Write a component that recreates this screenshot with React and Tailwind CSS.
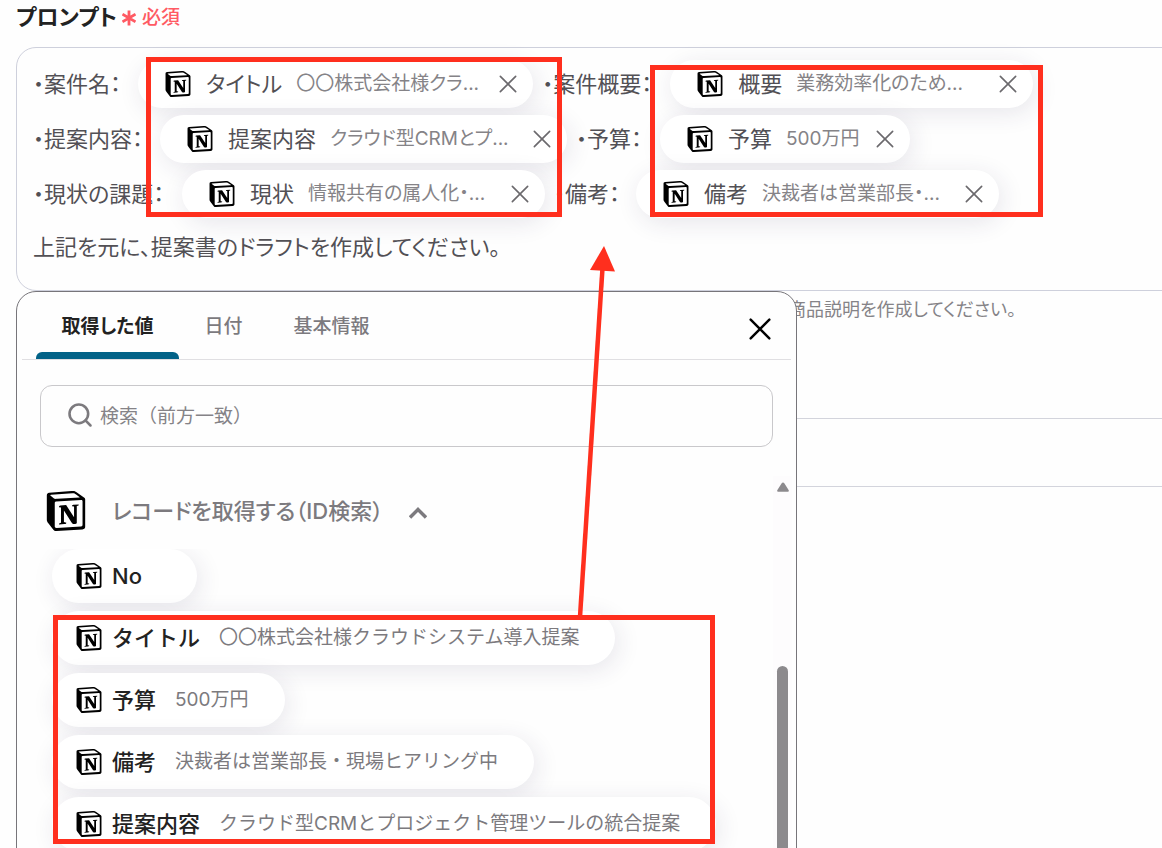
import { SiNotion } from "react-icons/si";
import { Search } from "lucide-react";

function Cross({ className, strokeWidth }) {
  return (
    <svg viewBox="0 0 20 20" className={className} fill="none" stroke="currentColor" strokeWidth={strokeWidth} strokeLinecap="round" aria-hidden="true">
      <path d="M1.5 1.5l17 17M18.5 1.5l-17 17" />
    </svg>
  );
}

function Token({ title, value, valueWidth = "w-[187px]" }) {
  return (
    <span className="flex h-12 shrink-0 items-center rounded-full bg-white pl-[27px] pr-4 shadow-[3px_5px_24px_rgba(50,40,80,0.11)]">
      <SiNotion className="size-[26px] shrink-0 text-black" />
      <span className="ml-[15px] text-[22px]">{title}</span>
      <span className={`ml-[14px] text-[19px] text-[#858387] ${valueWidth}`}>{value}</span>
      <button type="button" aria-label="削除" className="ml-4 text-[#6b696d]">
        <Cross className="size-[18px]" strokeWidth={1.8} />
      </button>
    </span>
  );
}

function Field({ title, value }) {
  return (
    <li className="flex">
      <button type="button" className="flex h-[54px] items-center whitespace-nowrap rounded-full bg-white pl-6 pr-9 shadow-[3px_5px_24px_rgba(50,40,80,0.11)]">
        <SiNotion className="size-[26px] shrink-0 text-black" />
        <span className="ml-[10px] text-[22px] font-medium text-[#222]">{title}</span>
        <span className="ml-[19px] text-[19px] text-[#7c7a7e]">{value}</span>
      </button>
    </li>
  );
}

const fields = [
  { title: "No", value: "" },
  { title: "タイトル", value: "〇〇株式会社様クラウドシステム導入提案" },
  { title: "予算", value: "500万円" },
  { title: "備考", value: "決裁者は営業部長・現場ヒアリング中" },
  { title: "提案内容", value: "クラウド型CRMとプロジェクト管理ツールの統合提案" },
];

function Picker() {
  return (
    <div className="absolute left-0 top-full z-10 flex h-[600px] w-[781px] flex-col rounded-t-[20px] border border-[#77757a] bg-[#fefefe]">
      <div className="mx-[5px] flex h-[68px] shrink-0 items-stretch border-b border-[#e0dfe2] pl-[14px] pr-5 text-[19px] font-medium text-[#7c7a7e] [font-feature-settings:'palt']">
        <button type="button" className="relative w-[143px] pt-[3px] font-bold text-[#222]">
          取得した値
          <span className="absolute inset-x-0 bottom-0 h-[7px] rounded-t-md bg-[#026287]" />
        </button>
        <button type="button" className="w-[89px] pt-[3px]">日付</button>
        <button type="button" className="w-[127px] pt-[3px]">基本情報</button>
        <button type="button" aria-label="閉じる" className="ml-auto mt-[6px] text-black">
          <Cross className="size-[22px]" strokeWidth={2.2} />
        </button>
      </div>
      <label className="mx-[23px] mt-[25px] flex h-[62px] shrink-0 items-center rounded-xl border border-[#c9c8cb] pl-[25px]">
        <Search className="mb-[3px] size-7 text-[#7c7a7e]" strokeWidth={2.2} />
        <input
          type="text"
          aria-label="検索"
          placeholder="検索（前方一致）"
          className="ml-[6px] min-w-0 flex-1 bg-transparent pt-[3px] text-[19px] text-[#222] outline-none placeholder:text-[#858387]"
        />
      </label>
      <div className="mt-[29px] flex min-h-0 flex-1">
        <div className="flex min-w-0 flex-1 flex-col">
          <button type="button" className="ml-[29px] mt-[15px] flex h-10 shrink-0 items-center text-[22px] font-medium text-[#7c7a7e] [font-feature-settings:'palt']">
            <SiNotion className="size-10 text-black" />
            <span className="ml-[26px]">レコードを取得する（ID検索）</span>
            <svg viewBox="0 0 18 12" className="ml-[26px] mt-1 h-3 w-[18px]" fill="none" stroke="currentColor" strokeWidth="3.4" aria-hidden="true">
              <path d="M1 10.5L9 2.5l8 8" />
            </svg>
          </button>
          <ul className="mt-[18px] flex min-h-0 flex-1 flex-col gap-2 overflow-hidden pl-[35px]">
            {fields.map((f) => (
              <Field key={f.title} title={f.title} value={f.value} />
            ))}
          </ul>
        </div>
        <div className="mr-1 flex w-[19px] flex-col items-center bg-[#fdfcfd] pt-[6px]">
          <svg viewBox="0 0 12 10" className="h-[10px] w-3 text-[#8c8a8d]" fill="currentColor" aria-hidden="true">
            <path d="M6 0.5q.8 0 1.3.8L11.6 8q.8 1.7-.8 1.7H1.2Q-.4 9.700.4 8L4.700 1.300Q5.200.5 6 .5z" />
          </svg>
          <div className="mt-[174px] w-[11px] flex-1 rounded-t-full bg-[#8c8a8d]" />
        </div>
      </div>
    </div>
  );
}

export default function App() {
  return (
    <main className="relative h-screen overflow-hidden bg-[#fefefe] pl-4 font-['Inter','Noto_Sans_CJK_JP',sans-serif] text-[#525055]">
      <h2 className="flex h-[47px] items-start pt-px text-[22px] font-bold leading-8 text-[#222] [font-feature-settings:'palt']">
        プロンプト
        <span className="ml-[5px] flex h-8 items-center gap-[6px] pt-[2px] text-[19px] font-medium text-[#ff5a63]">
          <svg viewBox="0 0 14 16" className="h-4 w-[14px]" stroke="currentColor" strokeWidth="2.8" aria-hidden="true">
            <path d="M7 0.500v15M0.500 4.200l13 7.600M13.500 4.200l-13 7.600" />
          </svg>
          必須
        </span>
      </h2>
      <div className="relative">
        <div className="-mr-6 flex h-[244px] flex-col gap-[7px] whitespace-nowrap rounded-[20px] border border-[#ced0dc] bg-[#fefefe] pl-4 pt-3 text-[22px] [font-feature-settings:'palt']">
          <div className="flex h-12 items-center">
            <span className="w-[105px]">・案件名：</span>
            <Token title="タイトル" value="〇〇株式会社様クラ..." />
            <span className="ml-[9px] w-[128px]">・案件概要：</span>
            <Token title="概要" value="業務効率化のため..." />
          </div>
          <div className="flex h-12 items-center">
            <span className="w-[127px]">・提案内容：</span>
            <Token title="提案内容" value="クラウド型CRMとプ..." />
            <span className="ml-[9px] w-[84px]">・予算：</span>
            <Token title="予算" value="500万円" valueWidth="w-[74px]" />
          </div>
          <div className="flex h-12 items-center">
            <span className="w-[149px]">・現状の課題：</span>
            <Token title="現状" value="情報共有の属人化・..." />
            <span className="ml-[9px] w-[82px]">・備考：</span>
            <Token title="備考" value="決裁者は営業部長・..." />
          </div>
          <p className="leading-[44px]">上記を元に、提案書のドラフトを作成してください。</p>
        </div>
        <Picker />
      </div>
      <p className="ml-[772px] h-[128px] whitespace-nowrap border-b border-[#d3d4dc] pt-1 text-[18px] leading-[30px] text-[#858387] [font-feature-settings:'palt']">
        商品説明を作成してください。
      </p>
      <div className="h-[68px] border-b border-[#d3d4dc]" />

      <div className="pointer-events-none absolute left-[146px] top-[57px] z-20 h-[160px] w-[416px] border-[5px] border-[#ff2f1e]" />
      <div className="pointer-events-none absolute left-[650px] top-[65px] z-20 h-[152px] w-[393px] border-[5px] border-[#ff2f1e]" />
      <div className="pointer-events-none absolute left-[53px] top-[615px] z-20 h-[229px] w-[662px] border-[5px] border-[#ff2f1e]" />
      <svg viewBox="0 0 40 372" className="pointer-events-none absolute left-[577px] top-[246px] z-20 h-[372px] w-10 text-[#ff2f1e]" fill="currentColor" aria-hidden="true">
        <path d="M3 371L25.500 22" stroke="currentColor" strokeWidth="4.500" />
        <path d="M27 0L38 25.500L13 24z" />
      </svg>
    </main>
  );
}
